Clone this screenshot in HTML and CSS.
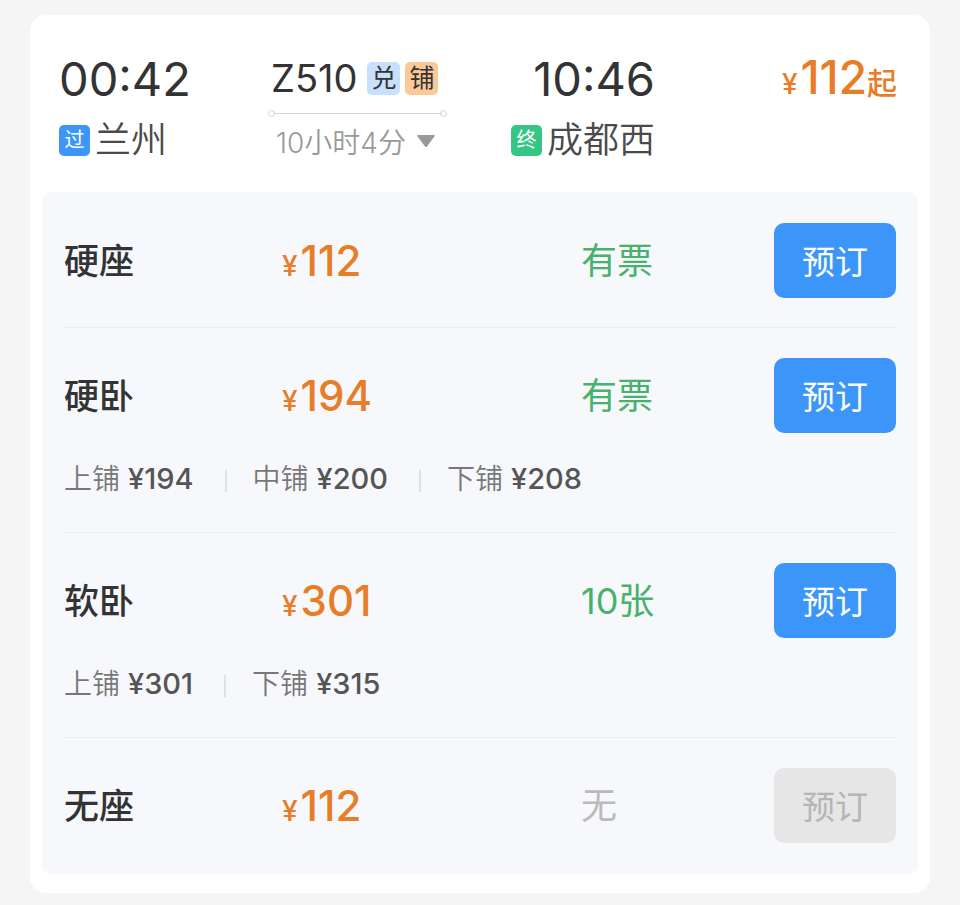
FILE: index.html
```html
<!DOCTYPE html>
<html lang="zh-CN">
<head>
    <meta charset="UTF-8">
    <meta name="viewport" content="width=device-width, initial-scale=1.0">
    <title>Z510 兰州 - 成都西</title>
    <link rel="stylesheet" href="styles.css">
</head>
<body>

<main class="train-card">
    <!-- Train summary -->
    <header class="summary">
        <div class="station">
            <div class="time">00:42</div>
            <div class="place"><span class="tag tag-pass">过</span>兰州</div>
        </div>
        <div class="train">
            <div class="train-no">Z510<span class="badge badge-blue">兑</span><span class="badge badge-orange">铺</span></div>
            <div class="route-line"></div>
            <button type="button" class="duration">10小时4分
                <svg class="caret" width="20" height="14" viewBox="0 0 20 14" aria-hidden="true">
                    <path d="M2 1h16q1.500 0 .6 1.200l-7.600 10.300q-1 1.200-2 0L1.400 2.200Q.5 1 2 1z" fill="#999"/>
                </svg>
            </button>
        </div>
        <div class="station station-end">
            <div class="time">10:46</div>
            <div class="place"><span class="tag tag-end">终</span>成都西</div>
        </div>
        <div class="from-price"><span class="yen">¥</span>112<span class="from">起</span></div>
    </header>

    <!-- Seat list -->
    <ul class="seats">
        <li class="seat">
            <div class="seat-row">
                <span class="seat-name">硬座</span>
                <span class="price"><span class="yen">¥</span>112</span>
                <span class="stock">有票</span>
                <button type="button" class="book-btn">预订</button>
            </div>
        </li>
        <li class="seat">
            <div class="seat-row">
                <span class="seat-name">硬卧</span>
                <span class="price"><span class="yen">¥</span>194</span>
                <span class="stock">有票</span>
                <button type="button" class="book-btn">预订</button>
            </div>
            <div class="berths">
                <span class="berth">上铺 <b>¥194</b></span>
                <span class="berth">中铺 <b>¥200</b></span>
                <span class="berth">下铺 <b>¥208</b></span>
            </div>
        </li>
        <li class="seat">
            <div class="seat-row">
                <span class="seat-name">软卧</span>
                <span class="price"><span class="yen">¥</span>301</span>
                <span class="stock">10张</span>
                <button type="button" class="book-btn">预订</button>
            </div>
            <div class="berths">
                <span class="berth">上铺 <b>¥301</b></span>
                <span class="berth">下铺 <b>¥315</b></span>
            </div>
        </li>
        <li class="seat">
            <div class="seat-row">
                <span class="seat-name">无座</span>
                <span class="price"><span class="yen">¥</span>112</span>
                <span class="stock stock-none">无</span>
                <button type="button" class="book-btn" disabled>预订</button>
            </div>
        </li>
    </ul>
</main>

</body>
</html>
```
FILE: styles.css
```css
* {
    box-sizing: border-box;
}

body {
    margin: 0;
    padding: 15px 30px 12px;
    background-color: #f5f5f5;
    color: #333;
    font-family: Inter, "Noto Sans CJK SC", sans-serif;
}

button {
    font-family: inherit;
    border: none;
    cursor: pointer;
}

.train-card {
    padding: 36px 12px 18px;
    background-color: #fff;
    border-radius: 16px;
}

/* Train summary */
.summary {
    display: grid;
    grid-template-columns: 209fr 179fr 208fr 242fr;
    padding: 0 21px 0 17px;
    margin-bottom: 29px;
}

.time {
    height: 56px;
    line-height: 56px;
    font-size: 47px;
    font-weight: 400;
}

.place {
    display: flex;
    align-items: center;
    gap: 5px;
    height: 56px;
    padding-top: 10px;
    line-height: 48px;
    color: #4a4a4a;
    font-size: 36px;
    font-weight: 350;
}

.tag {
    width: 31px;
    height: 31px;
    line-height: 31px;
    border-radius: 5px;
    color: #fff;
    font-size: 20px;
    font-weight: 400;
    text-align: center;
}

.tag-pass {
    background-color: #3c96f8;
}

.tag-end {
    background-color: #35c585;
}

.station-end {
    display: flex;
    flex-direction: column;
    align-items: flex-end;
}

.train-no {
    display: flex;
    align-items: center;
    height: 54px;
    padding-left: 3px;
    font-size: 38px;
    font-weight: 400;
}

.badge {
    width: 33px;
    height: 33px;
    line-height: 33px;
    margin-left: 5px;
    border-radius: 5px;
    font-size: 25px;
    font-weight: 400;
    text-align: center;
}

.badge-blue {
    margin-left: 10px;
    background-color: #c8e0fb;
}

.badge-orange {
    background-color: #fbc897;
}

.route-line {
    display: flex;
    align-items: center;
    justify-content: space-between;
    height: 16px;
    background: linear-gradient(#d8d8d8, #d8d8d8) center / calc(100% - 10px) 1px no-repeat;
}

.route-line::before,
.route-line::after {
    content: "";
    width: 5px;
    height: 5px;
    border: 1px solid #d5d5d5;
    border-radius: 50%;
}

.duration {
    display: flex;
    align-items: center;
    gap: 10px;
    height: 40px;
    padding: 0 0 0 8px;
    background: none;
    color: #999;
    font-size: 28px;
    font-weight: 350;
    white-space: nowrap;
}

.from-price {
    height: 52px;
    line-height: 52px;
    color: #e97c27;
    font-size: 46px;
    font-weight: 500;
    text-align: right;
}

.yen {
    margin-right: 3px;
    font-size: 28px;
    font-weight: 500;
}

.from {
    font-size: 30px;
}

/* Seat list */
.seats {
    margin: 0;
    padding: 0 22px;
    list-style: none;
    background-color: #f6f8fc;
    border-radius: 10px;
}

.seat {
    padding: 30px 0;
    border-bottom: 1px solid #eaecf0;
}

.seat:first-child {
    padding-top: 31px;
    padding-bottom: 29px;
}

.seat:last-child {
    padding-bottom: 32px;
    border-bottom: none;
}

.seat-row {
    display: grid;
    grid-template-columns: 218fr 299fr 193fr 122px;
    align-items: start;
    height: 75px;
    line-height: 76px;
}

.seat-name {
    font-size: 35px;
    font-weight: 500;
}

.price {
    color: #e97c27;
    font-size: 42px;
    font-weight: 500;
}

.stock {
    color: #48b26c;
    font-size: 36px;
    font-weight: 400;
}

.stock-none {
    color: #bbb;
}

.book-btn {
    height: 75px;
    padding: 0 0 2px;
    border-radius: 10px;
    background-color: #3c96fa;
    color: #fff;
    font-size: 33px;
    font-weight: 400;
}

.book-btn:disabled {
    background-color: #e6e6e6;
    color: #b5b5b5;
    cursor: default;
}

.berths {
    display: flex;
    height: 40px;
    line-height: 40px;
    margin-top: 26px;
    margin-bottom: 3px;
    color: #777;
    font-size: 28px;
    font-weight: 350;
}

.berth {
    display: flex;
    align-items: center;
    gap: 8px;
}

.berth b {
    color: #555;
    font-size: 29px;
    font-weight: 500;
}

.berth + .berth::before {
    content: "";
    width: 2px;
    height: 22px;
    margin: 4px 18px 0 31px;
    background-color: #dfe1e5;
}
```
